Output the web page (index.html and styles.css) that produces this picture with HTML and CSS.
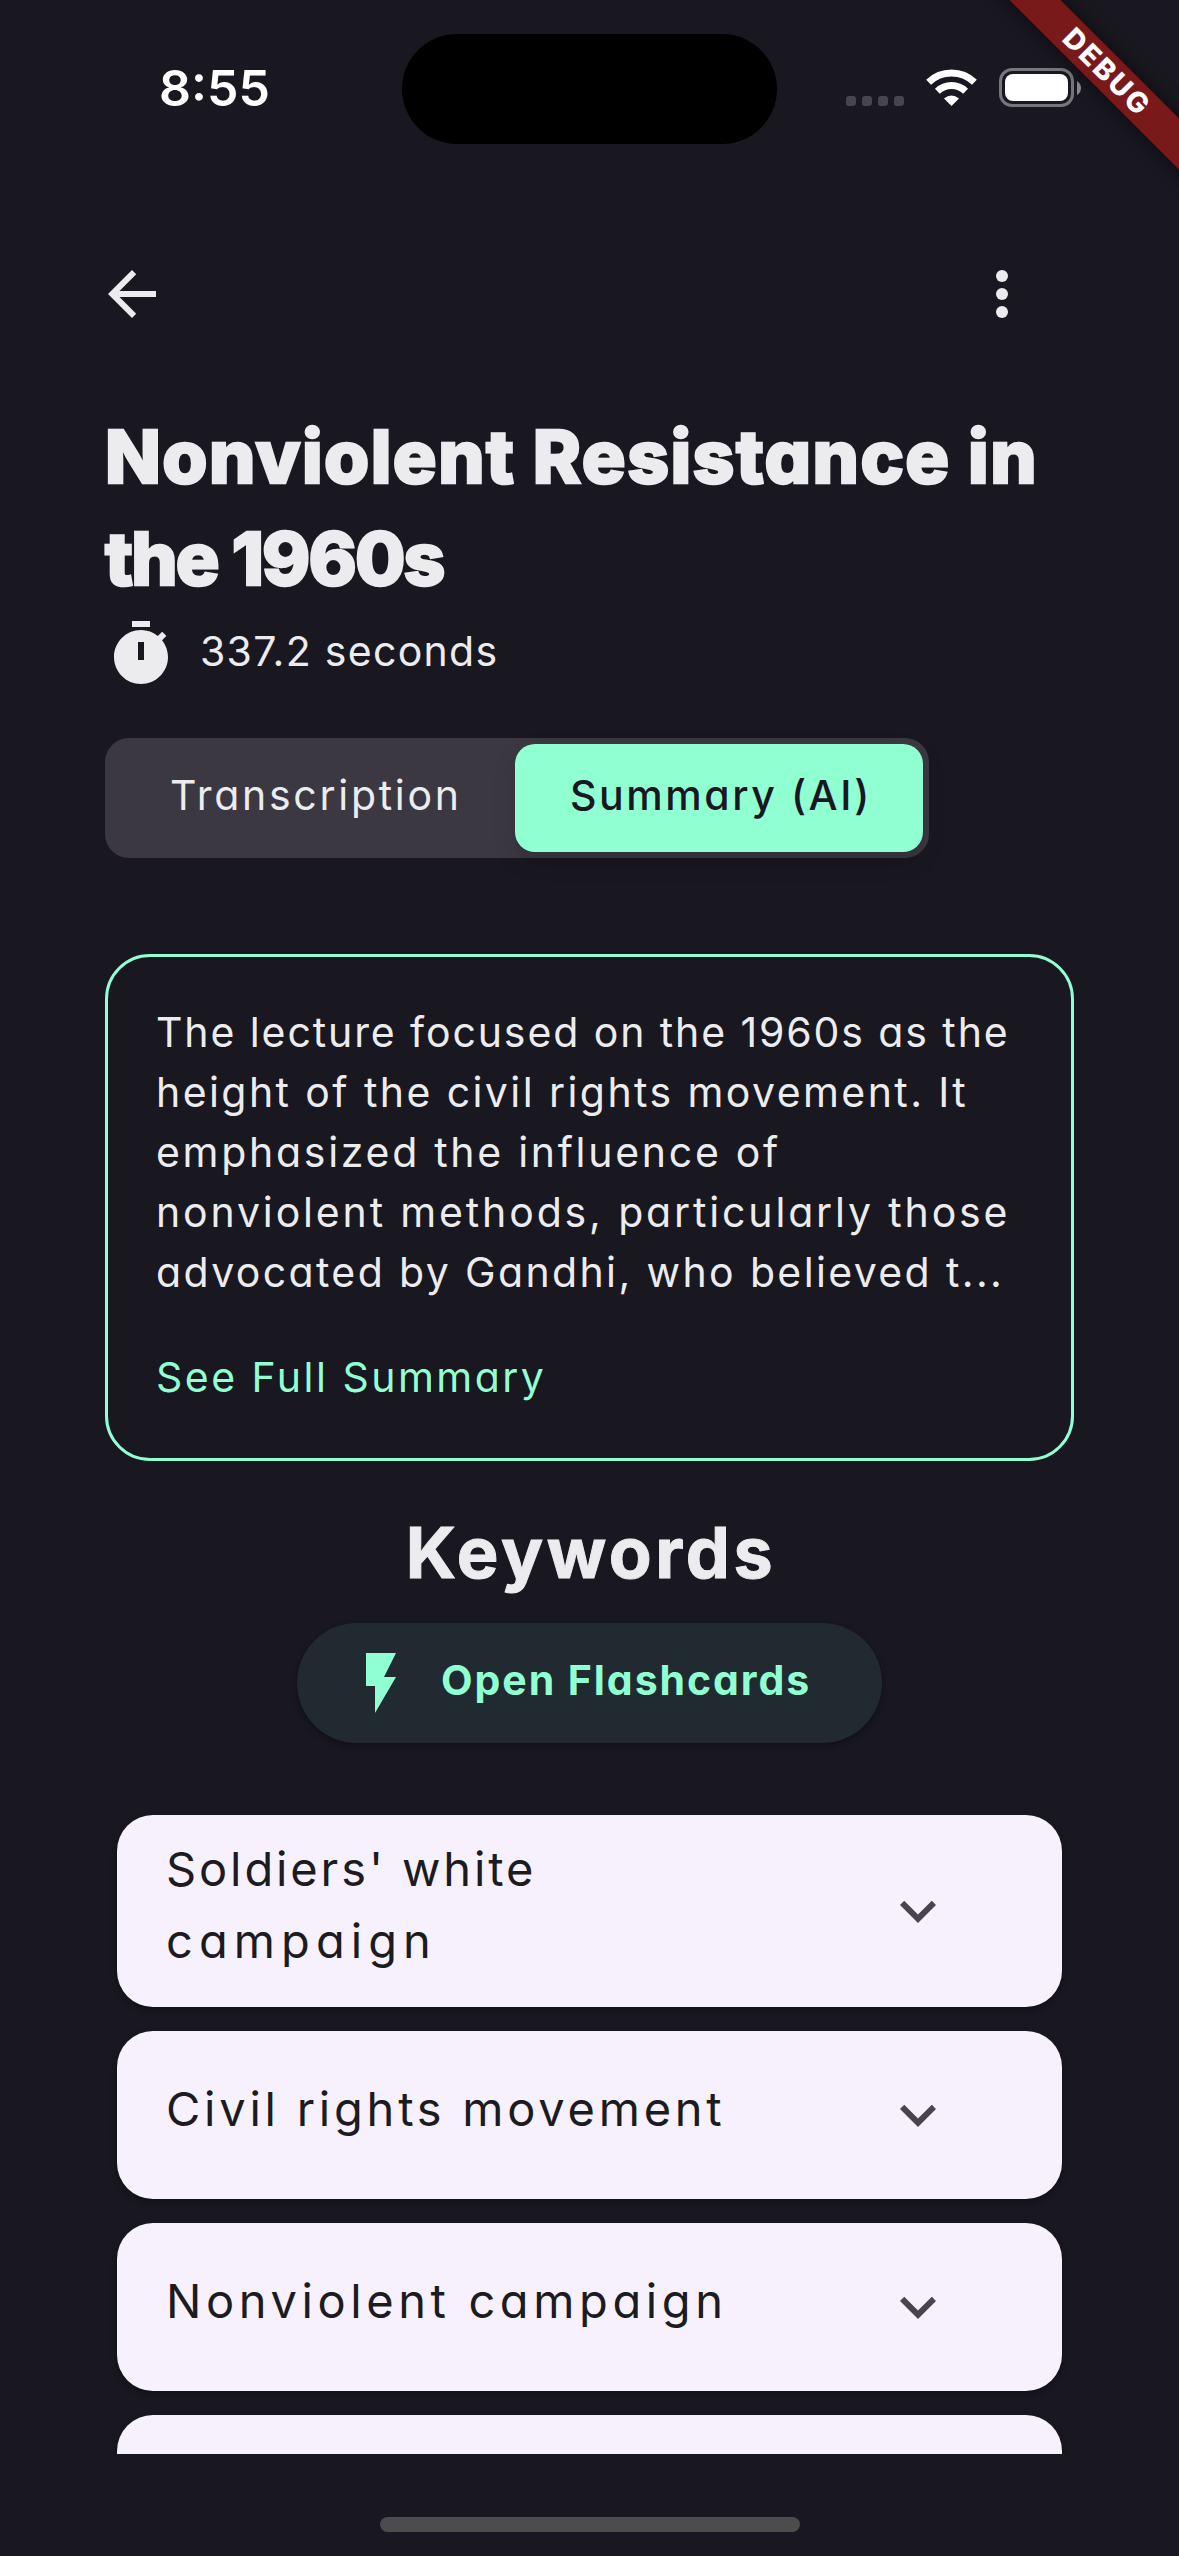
FILE: index.html
```html
<!DOCTYPE html>
<html lang="en">
<head>
<meta charset="utf-8">
<title>Lecture summary</title>
<link rel="stylesheet" href="styles.css">
</head>
<body>
<div class="screen">
  <header class="status">
    <div class="time"><span>8:55</span></div>
    <div class="island"></div>
    <div class="indicators">
      <div class="dots"><i></i><i></i><i></i><i></i></div>
      <svg class="wifi" width="51" height="38" viewBox="0 0 51 38"><g fill="none" stroke="#fff" stroke-width="7"><path d="M2.600 13.200a33 33 0 0 1 45.800 0"/><path d="M11.400 22.200a20.400 20.400 0 0 1 28.200 0"/></g><path fill="#fff" d="M18 29.500q7.500-6 15 0L25.500 37z"/></svg>
      <div class="battery"><div class="charge"></div></div>
      <svg class="nub" width="4" height="14" viewBox="0 0 4 14"><path fill="#8b8a8f" d="M0 0q4 2.500 4 7t-4 7z"/></svg>
    </div>
  </header>
  <div class="banner"><span>DEBUG</span></div>
  <nav class="toolbar">
    <svg width="72" height="72" viewBox="0 0 24 24"><path fill="#ececee" d="M20 11H7.830l5.590-5.590L12 4l-8 8 8 8 1.410-1.410L7.830 13H20v-2z"/></svg>
    <svg width="72" height="72" viewBox="0 0 24 24" fill="#ececee"><circle cx="12" cy="6" r="2"/><circle cx="12" cy="12" r="2"/><circle cx="12" cy="18" r="2"/></svg>
  </nav>
  <main class="content">
    <h1 class="title"><span class="t1">Nonviolent Resistance in</span><span class="t2">the 1960s</span></h1>
    <div class="meta">
      <svg width="72" height="72" viewBox="0 0 24 24"><path fill="#ececee" fill-rule="evenodd" d="M15 1H9v2h6V1zm-4 13h2V8h-2v6zm8.030-6.610l1.420-1.420c-.430-.510-.900-.990-1.410-1.410l-1.420 1.420C16.070 4.740 14.120 4 12 4c-4.970 0-9 4.030-9 9s4.020 9 9 9 9-4.030 9-9c0-2.120-.740-4.070-1.970-5.610z"/></svg>
      <span class="duration">337.2 seconds</span>
    </div>
    <div class="tabs">
      <div class="tab"><span>Transcription</span></div>
      <div class="tab active"><span>Summary (AI)</span></div>
    </div>
    <section class="summary">
      <p><span class="s1">The lecture focused on the 1960s as the</span><span class="s2">height of the civil rights movement. It</span><span class="s3">emphasized the influence of</span><span class="s4">nonviolent methods, particularly those</span><span class="s5">advocated by Gandhi, who believed t...</span></p>
      <a class="more"><span>See Full Summary</span></a>
    </section>
    <h2 class="heading"><span>Keywords</span></h2>
    <button class="flash">
      <svg width="72" height="72" viewBox="0 0 24 24"><path fill="#90ffd2" d="M7 2v11h3v9l7-12h-4l4-8z"/></svg>
      <span>Open Flashcards</span>
    </button>
    <div class="list">
      <div class="card tall"><div class="term"><span class="k1">Soldiers' white</span><span class="k2">campaign</span></div><svg width="72" height="72" viewBox="0 0 24 24"><path fill="#49454f" d="M16.590 8.590L12 13.170 7.410 8.590 6 10l6 6 6-6z"/></svg></div>
      <div class="card"><div class="term"><span class="k3">Civil rights movement</span></div><svg width="72" height="72" viewBox="0 0 24 24"><path fill="#49454f" d="M16.590 8.590L12 13.170 7.410 8.590 6 10l6 6 6-6z"/></svg></div>
      <div class="card"><div class="term"><span class="k4">Nonviolent campaign</span></div><svg width="72" height="72" viewBox="0 0 24 24"><path fill="#49454f" d="M16.590 8.590L12 13.170 7.410 8.590 6 10l6 6 6-6z"/></svg></div>
      <div class="card"></div>
    </div>
  </main>
  <div class="home"></div>
</div>
</body>
</html>
```

FILE: styles.css
```css
* { box-sizing: border-box; }
body { margin: 0; background: #19171f; font-family: Inter, "Open Sans", sans-serif; font-feature-settings: "cv11"; font-weight: 400; color: #ececee; }
.screen { position: relative; width: 1179px; height: 2556px; overflow: hidden; display: flex; flex-direction: column; }
svg { display: block; flex: none; }
span { white-space: nowrap; }

/* Status bar */
.status { display: flex; height: 258px; padding-top: 34px; align-items: flex-start; }
.time { width: 402px; padding: 24px 0 0 159px; font-size: 50px; line-height: 60px; font-weight: 600; color: #fff; }
.island { width: 375px; height: 110px; border-radius: 55px; background: #000; }
.indicators { display: flex; padding: 34px 0 0 69px; }
.dots { display: flex; gap: 6px; padding-top: 28px; }
.dots i { width: 10px; height: 10px; border-radius: 3px; background: #46454b; }
.wifi { margin: 1px 22px 0; }
.battery { width: 75px; height: 39px; border: 3px solid #77767c; border-radius: 13px; padding: 3px; }
.charge { height: 100%; background: #fff; border-radius: 8px; }
.nub { margin: 13px 0 0 3px; }
.banner { position: absolute; left: 957px; top: 54px; width: 300px; height: 36px; transform: rotate(45deg); background: #7a191a; color: #fff; font-size: 28.500px; line-height: 36px; font-weight: 800; letter-spacing: 2.340px; text-align: center; box-shadow: 0 0 18px rgba(0,0,0,.5); }

/* Lecture header */
.toolbar { display: flex; justify-content: space-between; padding: 0 141px 0 96px; height: 72px; }
.content { height: 2124px; padding: 76px 105px 0; overflow: hidden; }
.title { margin: 0; font-size: 73px; line-height: 102px; font-weight: 800; height: 212px; -webkit-text-stroke: 2.500px #ececee; }
.title span, .summary span, .term span { display: block; }
.t1 { letter-spacing: 1.470px; }
.t2 { letter-spacing: -1.890px; }
.meta { display: flex; align-items: center; font-size: 41px; line-height: 60px; }
.duration { padding: 0 0 6px 23px; letter-spacing: 1.290px; }

/* Tabs */
.tabs { display: flex; width: 824px; height: 120px; margin-top: 48px; padding: 6px; background: #3b3841; border-radius: 24px; font-size: 41px; letter-spacing: 2.700px; }
.tab { width: 404px; display: flex; align-items: center; padding: 0 0 7px 59px; }
.tab.active { width: 408px; padding-left: 55px; background: #90ffd2; color: #19171f; border-radius: 20px; font-weight: 500; letter-spacing: 2.570px; box-shadow: 0 9px 24px rgba(0,0,0,.12), 0 9px 3px rgba(0,0,0,.04); }

/* Summary */
.summary { height: 507px; margin-top: 96px; padding: 45px 48px 0; border: 3px solid #90ffd2; border-radius: 45px; font-size: 41px; line-height: 60px; }
.summary p { margin: 0 0 45px; }
.s1 { letter-spacing: 1.900px; }
.s2 { letter-spacing: 2.420px; }
.s3 { letter-spacing: 2.710px; }
.s4 { letter-spacing: 2.850px; }
.s5 { letter-spacing: 2.370px; }
.more { color: #90ffd2; letter-spacing: 2.480px; }

/* Keywords */
.heading { margin: 44px 0 22px; padding-left: 3px; font-size: 70px; line-height: 96px; font-weight: 700; letter-spacing: 3.610px; text-align: center; -webkit-text-stroke: 1px #ececee; }
.flash { display: flex; align-items: center; width: 585px; height: 120px; margin: 0 auto; padding: 0 0 0 48px; border: 0; border-radius: 60px; background: #222a31; color: #90ffd2; font: 700 41px Inter, sans-serif; font-feature-settings: "cv11"; letter-spacing: 1.940px; box-shadow: 0 3px 6px rgba(0,0,0,.3); }
.flash span { padding: 0 0 6px 24px; }
.list { display: flex; flex-direction: column; gap: 24px; padding: 72px 12px 0; }
.card { display: flex; align-items: center; justify-content: space-between; height: 168px; flex: none; padding: 0 108px 0 49px; background: #f6f1fc; color: #1c1b1f; border-radius: 36px; box-shadow: 0 3px 6px rgba(0,0,0,.3); font-size: 47px; line-height: 72px; }
.tall { height: 192px; }
.term { padding-bottom: 12px; }
.k1 { letter-spacing: 2.890px; }
.k2 { letter-spacing: 6.080px; }
.k3 { letter-spacing: 3.760px; }
.k4 { letter-spacing: 4.600px; }
.home { width: 420px; height: 15px; margin: 63px 0 0 380px; border-radius: 8px; background: #4c4c4c; }
```
